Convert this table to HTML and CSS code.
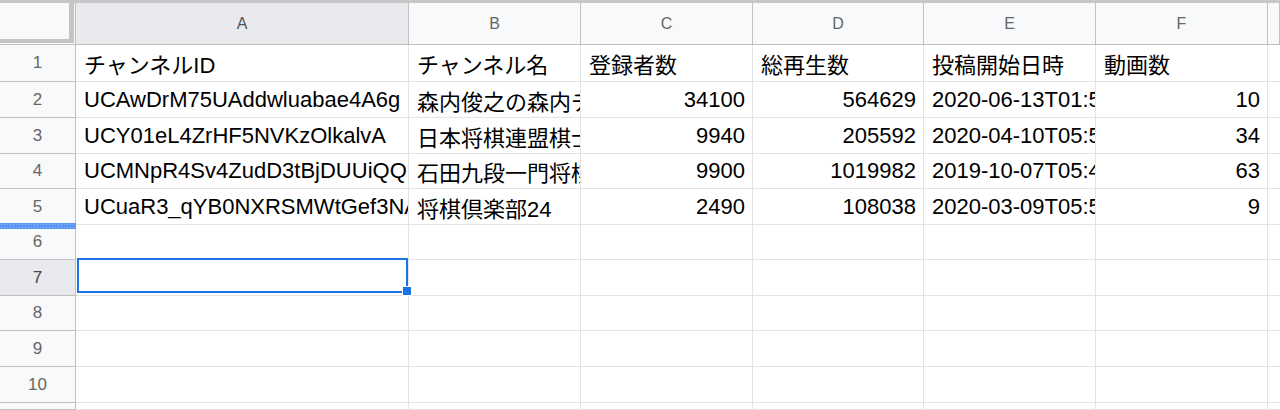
FILE: index.html
```html
<!DOCTYPE html>
<html lang="ja">
<head>
<meta charset="utf-8">
<title>Sheet</title>
<link rel="stylesheet" href="styles.css">
</head>
<body>
<div class="topstrip"></div>
<div class="grid">
  <div class="corner"><div class="corner-inner"></div></div>
  <div class="colhead sel">A</div>
  <div class="colhead">B</div>
  <div class="colhead">C</div>
  <div class="colhead">D</div>
  <div class="colhead">E</div>
  <div class="colhead">F</div>
  <div class="colhead last"></div>

  <div class="rowhead">1</div>
  <div class="cell">チャンネルID</div>
  <div class="cell">チャンネル名</div>
  <div class="cell">登録者数</div>
  <div class="cell">総再生数</div>
  <div class="cell">投稿開始日時</div>
  <div class="cell">動画数</div>
  <div class="cell last"></div>

  <div class="rowhead">2</div>
  <div class="cell">UCAwDrM75UAddwluabae4A6g</div>
  <div class="cell">森内俊之の森内チャンネル</div>
  <div class="cell num">34100</div>
  <div class="cell num">564629</div>
  <div class="cell">2020-06-13T01:58:02.000Z</div>
  <div class="cell num">10</div>
  <div class="cell last"></div>

  <div class="rowhead">3</div>
  <div class="cell">UCY01eL4ZrHF5NVKzOlkalvA</div>
  <div class="cell">日本将棋連盟棋士会</div>
  <div class="cell num">9940</div>
  <div class="cell num">205592</div>
  <div class="cell">2020-04-10T05:55:17.000Z</div>
  <div class="cell num">34</div>
  <div class="cell last"></div>

  <div class="rowhead">4</div>
  <div class="cell">UCMNpR4Sv4ZudD3tBjDUUiQQ</div>
  <div class="cell">石田九段一門将棋チャンネル</div>
  <div class="cell num">9900</div>
  <div class="cell num">1019982</div>
  <div class="cell">2019-10-07T05:43:11.000Z</div>
  <div class="cell num">63</div>
  <div class="cell last"></div>

  <div class="rowhead">5</div>
  <div class="cell">UCuaR3_qYB0NXRSMWtGef3NA</div>
  <div class="cell">将棋倶楽部24</div>
  <div class="cell num">2490</div>
  <div class="cell num">108038</div>
  <div class="cell">2020-03-09T05:52:40.000Z</div>
  <div class="cell num">9</div>
  <div class="cell last"></div>

  <div class="rowhead freeze">6<span class="freezebar"></span></div>
  <div class="cell"></div><div class="cell"></div><div class="cell"></div><div class="cell"></div><div class="cell"></div><div class="cell"></div><div class="cell last"></div>

  <div class="rowhead sel">7</div>
  <div class="cell active"><span class="selbox"></span><span class="handle"></span></div>
  <div class="cell"></div><div class="cell"></div><div class="cell"></div><div class="cell"></div><div class="cell"></div><div class="cell last"></div>

  <div class="rowhead">8</div>
  <div class="cell"></div><div class="cell"></div><div class="cell"></div><div class="cell"></div><div class="cell"></div><div class="cell"></div><div class="cell last"></div>

  <div class="rowhead">9</div>
  <div class="cell"></div><div class="cell"></div><div class="cell"></div><div class="cell"></div><div class="cell"></div><div class="cell"></div><div class="cell last"></div>

  <div class="rowhead">10</div>
  <div class="cell"></div><div class="cell"></div><div class="cell"></div><div class="cell"></div><div class="cell"></div><div class="cell"></div><div class="cell last"></div>

  <div class="rowhead"></div>
  <div class="cell"></div><div class="cell"></div><div class="cell"></div><div class="cell"></div><div class="cell"></div><div class="cell"></div><div class="cell last"></div>
</div>
</body>
</html>
```

FILE: styles.css
```css
html, body {
  margin: 0;
  padding: 0;
  background: #ffffff;
  overflow: hidden;
}

body {
  width: 1280px;
  height: 410px;
  font-family: "Liberation Sans", "Noto Sans CJK JP", sans-serif;
}

.topstrip {
  height: 3px;
  background: #c6c6c6;
}

.grid {
  display: grid;
  grid-template-columns: 76px 333px 172px 172px 171px 172px 172px 1fr;
  grid-template-rows: 42px 37px 36px 36px 35px 36px 35px 36px 35px 36px 36px 1fr;
  height: 407px;
}

.corner {
  background: #f8f9fa;
  border-right: 1px solid #c0c0c0;
  border-bottom: 1px solid #c0c0c0;
  display: flex;
}

.corner-inner {
  width: 74px;
  height: 40px;
  box-sizing: border-box;
  border-right: 5px solid #c4c4c4;
  border-bottom: 4px solid #c4c4c4;
}

.colhead {
  background: #f8f9fa;
  border-right: 1px solid #c0c0c0;
  border-bottom: 1px solid #c0c0c0;
  color: #666666;
  font-size: 16px;
  display: flex;
  align-items: center;
  justify-content: center;
}

.colhead.sel {
  background: #e8eaed;
  color: #555555;
}

.rowhead {
  position: relative;
  background: #f8f9fa;
  border-right: 1px solid #c0c0c0;
  border-bottom: 1px solid #c0c0c0;
  color: #666666;
  font-size: 17px;
  display: flex;
  align-items: center;
  justify-content: center;
}

.rowhead.sel {
  background: #e8eaed;
  color: #444444;
}

.freezebar {
  position: absolute;
  left: 0;
  right: -1px;
  top: -2px;
  height: 6px;
  background-color: #5b96f2;
  background-image: radial-gradient(circle, #8fb8f7 0.8px, transparent 1px);
  background-size: 3px 3px;
}

.cell {
  position: relative;
  border-right: 1px solid #e2e3e3;
  border-bottom: 1px solid #e2e3e3;
  font-size: 22px;
  color: #000000;
  white-space: nowrap;
  overflow: hidden;
  padding: 0 8px;
  display: flex;
  align-items: center;
  min-width: 0;
}

.cell.num {
  justify-content: flex-end;
  padding-right: 7px;
}

.cell.last {
  border-right: none;
  padding: 0;
}

.cell.active {
  overflow: visible;
  z-index: 2;
}

.selbox {
  position: absolute;
  left: 1px;
  right: 0;
  top: -2px;
  bottom: 2px;
  border: 2px solid #1a73e8;
}

.handle {
  position: absolute;
  right: -4px;
  bottom: -1px;
  width: 10px;
  height: 10px;
  box-sizing: border-box;
  background: #1a73e8;
  border: 1px solid #ffffff;
}
```
